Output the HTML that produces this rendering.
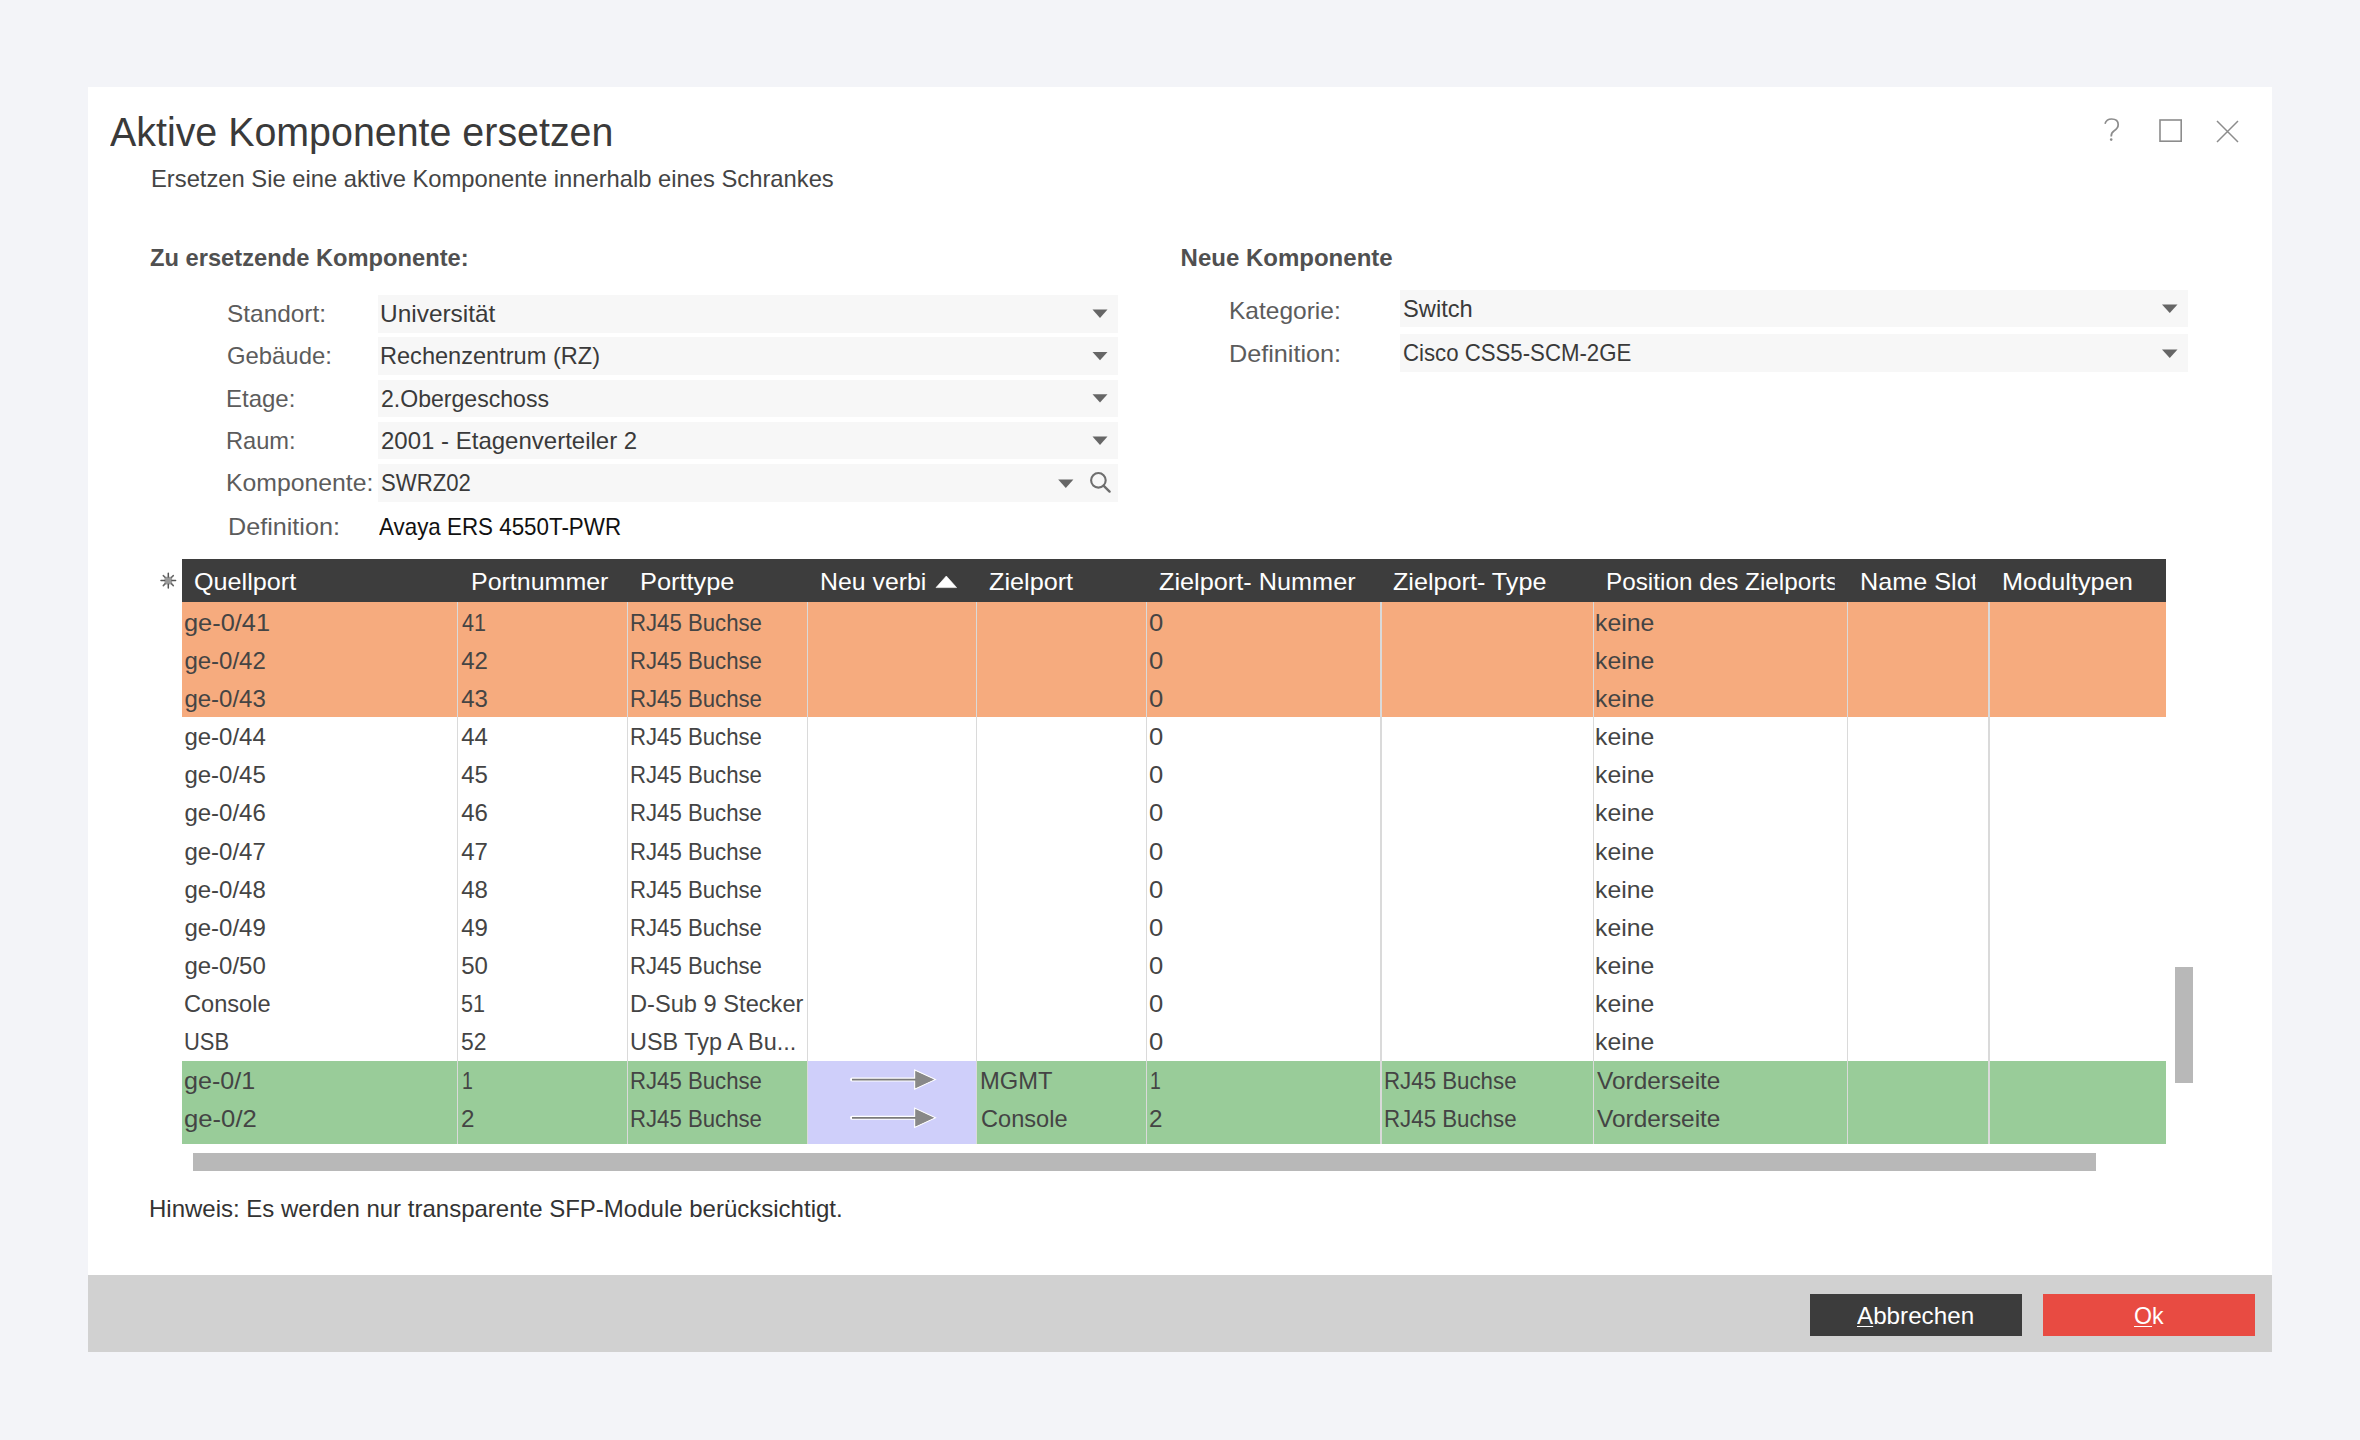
<!DOCTYPE html>
<html><head><meta charset="utf-8"><style>
html,body{margin:0;padding:0;}
body{width:2360px;height:1440px;background:#f3f4f8;position:relative;overflow:hidden;font-family:"Liberation Sans", sans-serif;}
u{text-decoration-thickness:1.4px;text-underline-offset:1.5px;}
</style></head><body>
<div style="position:absolute;left:88px;top:87px;width:2184.00px;height:1265.00px;background:#ffffff;"></div><div style="position:absolute;left:88px;top:1275px;width:2184.00px;height:77.00px;background:#d1d1d1;"></div><div style="position:absolute;left:110.00px;top:112.00px;font-size:40px;line-height:40px;color:#3a3a3a;font-weight:400;white-space:pre;transform:scaleX(0.9843);transform-origin:0 0;">Aktive Komponente ersetzen</div><div style="position:absolute;left:150.72px;top:166.60px;font-size:24px;line-height:24px;color:#444;font-weight:400;white-space:pre;transform:scaleX(0.9898);transform-origin:0 0;">Ersetzen Sie eine aktive Komponente innerhalb eines Schrankes</div><div style="position:absolute;left:150.01px;top:245.60px;font-size:24px;line-height:24px;color:#505050;font-weight:700;white-space:pre;transform:scaleX(0.9875);transform-origin:0 0;">Zu ersetzende Komponente:</div><div style="position:absolute;left:1180.61px;top:245.60px;font-size:24px;line-height:24px;color:#505050;font-weight:700;white-space:pre;">Neue Komponente</div><svg style="position:absolute;left:0;top:0" width="2360" height="1440">
<path d="M2105 123.8 Q2106.5 119 2111.6 119 Q2118.2 119 2118.2 124.6 Q2118.2 128.4 2114.2 130.8 Q2111.2 132.6 2111.2 136.4" fill="none" stroke="#8c8c8c" stroke-width="1.7"/>
<circle cx="2111.2" cy="139.6" r="1.3" fill="#8c8c8c"/>
<rect x="2160" y="120" width="21.2" height="21.2" fill="none" stroke="#8c8c8c" stroke-width="1.6"/>
<path d="M2217 121 L2238 142 M2238 121 L2217 142" stroke="#8c8c8c" stroke-width="1.5"/>
</svg><div style="position:absolute;left:378px;top:295.0px;width:739.70px;height:37.60px;background:#f7f7f7;"></div><div style="position:absolute;left:226.98px;top:302.00px;font-size:24px;line-height:24px;color:#5c5c5c;font-weight:400;white-space:pre;transform:scaleX(1.0170);transform-origin:0 0;">Standort:</div><div style="position:absolute;left:379.96px;top:302.00px;font-size:24px;line-height:24px;color:#3a3a3a;font-weight:400;white-space:pre;transform:scaleX(1.0180);transform-origin:0 0;">Universität</div><div style="position:absolute;left:378px;top:337.3px;width:739.70px;height:37.60px;background:#f7f7f7;"></div><div style="position:absolute;left:227.01px;top:344.30px;font-size:24px;line-height:24px;color:#5c5c5c;font-weight:400;white-space:pre;transform:scaleX(0.9941);transform-origin:0 0;">Gebäude:</div><div style="position:absolute;left:380.04px;top:344.30px;font-size:24px;line-height:24px;color:#3a3a3a;font-weight:400;white-space:pre;transform:scaleX(0.9819);transform-origin:0 0;">Rechenzentrum (RZ)</div><div style="position:absolute;left:378px;top:379.6px;width:739.70px;height:37.60px;background:#f7f7f7;"></div><div style="position:absolute;left:226.00px;top:386.60px;font-size:24px;line-height:24px;color:#5c5c5c;font-weight:400;white-space:pre;">Etage:</div><div style="position:absolute;left:381.04px;top:386.60px;font-size:24px;line-height:24px;color:#3a3a3a;font-weight:400;white-space:pre;transform:scaleX(0.9613);transform-origin:0 0;">2.Obergeschoss</div><div style="position:absolute;left:378px;top:421.9px;width:739.70px;height:37.60px;background:#f7f7f7;"></div><div style="position:absolute;left:226.03px;top:428.90px;font-size:24px;line-height:24px;color:#5c5c5c;font-weight:400;white-space:pre;transform:scaleX(0.9851);transform-origin:0 0;">Raum:</div><div style="position:absolute;left:381.00px;top:428.90px;font-size:24px;line-height:24px;color:#3a3a3a;font-weight:400;white-space:pre;">2001 - Etagenverteiler 2</div><div style="position:absolute;left:378px;top:464.2px;width:739.70px;height:37.60px;background:#f7f7f7;"></div><div style="position:absolute;left:225.94px;top:471.20px;font-size:24px;line-height:24px;color:#5c5c5c;font-weight:400;white-space:pre;transform:scaleX(1.0324);transform-origin:0 0;">Komponente:</div><div style="position:absolute;left:381.08px;top:471.20px;font-size:24px;line-height:24px;color:#3a3a3a;font-weight:400;white-space:pre;transform:scaleX(0.9221);transform-origin:0 0;">SWRZ02</div><div style="position:absolute;left:227.70px;top:514.60px;font-size:24px;line-height:24px;color:#5c5c5c;font-weight:400;white-space:pre;transform:scaleX(1.0485);transform-origin:0 0;">Definition:</div><div style="position:absolute;left:379.00px;top:514.60px;font-size:24px;line-height:24px;color:#111;font-weight:400;white-space:pre;transform:scaleX(0.9322);transform-origin:0 0;">Avaya ERS 4550T-PWR</div><div style="position:absolute;left:1400px;top:290px;width:788.00px;height:36.80px;background:#f7f7f7;"></div><div style="position:absolute;left:1400px;top:334px;width:788.00px;height:37.80px;background:#f7f7f7;"></div><div style="position:absolute;left:1228.56px;top:298.90px;font-size:24px;line-height:24px;color:#5c5c5c;font-weight:400;white-space:pre;transform:scaleX(1.0210);transform-origin:0 0;">Kategorie:</div><div style="position:absolute;left:1228.50px;top:341.60px;font-size:24px;line-height:24px;color:#5c5c5c;font-weight:400;white-space:pre;transform:scaleX(1.0505);transform-origin:0 0;">Definition:</div><div style="position:absolute;left:1402.91px;top:296.60px;font-size:24px;line-height:24px;color:#3a3a3a;font-weight:400;white-space:pre;transform:scaleX(0.9868);transform-origin:0 0;">Switch</div><div style="position:absolute;left:1402.97px;top:341.20px;font-size:24px;line-height:24px;color:#3a3a3a;font-weight:400;white-space:pre;transform:scaleX(0.9253);transform-origin:0 0;">Cisco CSS5-SCM-2GE</div><svg style="position:absolute;left:0;top:0" width="2360" height="1440"><path d="M1092.5 309.6 L1107.5 309.6 L1100.00 318.0 Z" fill="#666"/><path d="M1092.5 351.9 L1107.5 351.9 L1100.00 360.3 Z" fill="#666"/><path d="M1092.5 394.2 L1107.5 394.2 L1100.00 402.6 Z" fill="#666"/><path d="M1092.5 436.5 L1107.5 436.5 L1100.00 444.9 Z" fill="#666"/><path d="M1058.2 479.6 L1073.4 479.6 L1065.80 488.0 Z" fill="#666"/><path d="M2162 304.5 L2177.5 304.5 L2169.75 312.9 Z" fill="#666"/><path d="M2162 349.5 L2177.5 349.5 L2169.75 357.9 Z" fill="#666"/><circle cx="1098.4" cy="480.3" r="7.3" fill="none" stroke="#6e6e6e" stroke-width="2.1"/><path d="M1103.5 485.6 L1109.6 491.6" stroke="#6e6e6e" stroke-width="2.4" stroke-linecap="round"/></svg><div style="position:absolute;left:181.8px;top:559px;width:1984.60px;height:43.00px;background:#3d3d3d;"></div><div style="position:absolute;left:193.95px;top:569.60px;font-size:24px;line-height:24px;color:#fff;font-weight:400;white-space:pre;transform:scaleX(1.0490);transform-origin:0 0;">Quellport</div><div style="position:absolute;left:470.62px;top:569.60px;font-size:24px;line-height:24px;color:#fff;font-weight:400;white-space:pre;transform:scaleX(1.0408);transform-origin:0 0;">Portnummer</div><div style="position:absolute;left:640.09px;top:569.60px;font-size:24px;line-height:24px;color:#fff;font-weight:400;white-space:pre;transform:scaleX(1.0570);transform-origin:0 0;">Porttype</div><div style="position:absolute;left:819.53px;top:569.60px;font-size:24px;line-height:24px;color:#fff;font-weight:400;white-space:pre;transform:scaleX(1.0354);transform-origin:0 0;">Neu verbi</div><div style="position:absolute;left:988.95px;top:569.60px;font-size:24px;line-height:24px;color:#fff;font-weight:400;white-space:pre;transform:scaleX(1.0506);transform-origin:0 0;">Zielport</div><div style="position:absolute;left:1159.45px;top:569.60px;font-size:24px;line-height:24px;color:#fff;font-weight:400;white-space:pre;transform:scaleX(1.0532);transform-origin:0 0;">Zielport- Nummer</div><div style="position:absolute;left:1393.35px;top:569.60px;font-size:24px;line-height:24px;color:#fff;font-weight:400;white-space:pre;transform:scaleX(1.0486);transform-origin:0 0;">Zielport- Type</div><div style="position:absolute;left:1605.58px;top:569.60px;font-size:24px;line-height:24px;color:#fff;font-weight:400;white-space:pre;transform:scaleX(1.0120);transform-origin:0 0;width:226.2px;overflow:hidden;">Position des Zielports</div><div style="position:absolute;left:1860.30px;top:569.60px;font-size:24px;line-height:24px;color:#fff;font-weight:400;white-space:pre;transform:scaleX(1.0500);transform-origin:0 0;width:110.2px;overflow:hidden;">Name Slot</div><div style="position:absolute;left:2001.69px;top:569.60px;font-size:24px;line-height:24px;color:#fff;font-weight:400;white-space:pre;transform:scaleX(1.0545);transform-origin:0 0;">Modultypen</div><svg style="position:absolute;left:0;top:0" width="2360" height="1440"><path d="M936 587.6 L956.6 587.6 L946.3 576 Z" fill="#fff" stroke="#fff" stroke-width="0.6" stroke-linejoin="round"/></svg><svg style="position:absolute;left:0;top:0" width="2360" height="1440">
<rect x="164.5" y="576.8" width="7.6" height="7.6" fill="#999"/>
<g stroke="#555" stroke-width="1.5" stroke-linecap="round">
<path d="M168.3 573.2 L168.3 577 M168.3 584.2 L168.3 588 M161 580.6 L164.6 580.6 M172 580.6 L175.6 580.6"/>
<path d="M163.3 575.6 L165 577.3 M173.3 575.6 L171.6 577.3 M163.3 585.6 L165 583.9 M173.3 585.6 L171.6 583.9" stroke="#666"/>
</g></svg><div style="position:absolute;left:181.8px;top:602px;width:1984.60px;height:114.51px;background:#f6ab7e;"></div><div style="position:absolute;left:181.8px;top:1060.7px;width:1984.60px;height:83.30px;background:#99cc99;"></div><div style="position:absolute;left:807.3px;top:1060.7px;width:169.50px;height:83.30px;background:#cfcffa;"></div><div style="position:absolute;left:457.15000000000003px;top:602px;width:1.30px;height:542.00px;background:#dadada;"></div><div style="position:absolute;left:626.75px;top:602px;width:1.30px;height:542.00px;background:#dadada;"></div><div style="position:absolute;left:806.65px;top:602px;width:1.30px;height:542.00px;background:#dadada;"></div><div style="position:absolute;left:976.15px;top:602px;width:1.30px;height:542.00px;background:#dadada;"></div><div style="position:absolute;left:1145.75px;top:602px;width:1.30px;height:542.00px;background:#dadada;"></div><div style="position:absolute;left:1380.35px;top:602px;width:1.30px;height:542.00px;background:#dadada;"></div><div style="position:absolute;left:1592.55px;top:602px;width:1.30px;height:542.00px;background:#dadada;"></div><div style="position:absolute;left:1846.85px;top:602px;width:1.30px;height:542.00px;background:#dadada;"></div><div style="position:absolute;left:1988.25px;top:602px;width:1.30px;height:542.00px;background:#dadada;"></div><div style="position:absolute;left:184.34px;top:610.60px;font-size:24px;line-height:24px;color:#444;font-weight:400;white-space:pre;transform:scaleX(1.0570);transform-origin:0 0;">ge-0/41</div><div style="position:absolute;left:462.20px;top:610.60px;font-size:24px;line-height:24px;color:#444;font-weight:400;white-space:pre;transform:scaleX(0.8962);transform-origin:0 0;">41</div><div style="position:absolute;left:630.45px;top:610.60px;font-size:24px;line-height:24px;color:#444;font-weight:400;white-space:pre;transform:scaleX(0.9243);transform-origin:0 0;">RJ45 Buchse</div><div style="position:absolute;left:1149.13px;top:610.60px;font-size:24px;line-height:24px;color:#444;font-weight:400;white-space:pre;transform:scaleX(1.0667);transform-origin:0 0;">0</div><div style="position:absolute;left:1594.54px;top:610.60px;font-size:24px;line-height:24px;color:#444;font-weight:400;white-space:pre;transform:scaleX(1.0315);transform-origin:0 0;">keine</div><div style="position:absolute;left:184.40px;top:648.77px;font-size:24px;line-height:24px;color:#444;font-weight:400;white-space:pre;">ge-0/42</div><div style="position:absolute;left:461.20px;top:648.77px;font-size:24px;line-height:24px;color:#444;font-weight:400;white-space:pre;">42</div><div style="position:absolute;left:630.45px;top:648.77px;font-size:24px;line-height:24px;color:#444;font-weight:400;white-space:pre;transform:scaleX(0.9243);transform-origin:0 0;">RJ45 Buchse</div><div style="position:absolute;left:1149.13px;top:648.77px;font-size:24px;line-height:24px;color:#444;font-weight:400;white-space:pre;transform:scaleX(1.0667);transform-origin:0 0;">0</div><div style="position:absolute;left:1594.54px;top:648.77px;font-size:24px;line-height:24px;color:#444;font-weight:400;white-space:pre;transform:scaleX(1.0315);transform-origin:0 0;">keine</div><div style="position:absolute;left:184.40px;top:686.94px;font-size:24px;line-height:24px;color:#444;font-weight:400;white-space:pre;">ge-0/43</div><div style="position:absolute;left:461.20px;top:686.94px;font-size:24px;line-height:24px;color:#444;font-weight:400;white-space:pre;">43</div><div style="position:absolute;left:630.45px;top:686.94px;font-size:24px;line-height:24px;color:#444;font-weight:400;white-space:pre;transform:scaleX(0.9243);transform-origin:0 0;">RJ45 Buchse</div><div style="position:absolute;left:1149.13px;top:686.94px;font-size:24px;line-height:24px;color:#444;font-weight:400;white-space:pre;transform:scaleX(1.0667);transform-origin:0 0;">0</div><div style="position:absolute;left:1594.54px;top:686.94px;font-size:24px;line-height:24px;color:#444;font-weight:400;white-space:pre;transform:scaleX(1.0315);transform-origin:0 0;">keine</div><div style="position:absolute;left:184.40px;top:725.11px;font-size:24px;line-height:24px;color:#444;font-weight:400;white-space:pre;">ge-0/44</div><div style="position:absolute;left:461.20px;top:725.11px;font-size:24px;line-height:24px;color:#444;font-weight:400;white-space:pre;">44</div><div style="position:absolute;left:630.45px;top:725.11px;font-size:24px;line-height:24px;color:#444;font-weight:400;white-space:pre;transform:scaleX(0.9243);transform-origin:0 0;">RJ45 Buchse</div><div style="position:absolute;left:1149.13px;top:725.11px;font-size:24px;line-height:24px;color:#444;font-weight:400;white-space:pre;transform:scaleX(1.0667);transform-origin:0 0;">0</div><div style="position:absolute;left:1594.54px;top:725.11px;font-size:24px;line-height:24px;color:#444;font-weight:400;white-space:pre;transform:scaleX(1.0315);transform-origin:0 0;">keine</div><div style="position:absolute;left:184.40px;top:763.28px;font-size:24px;line-height:24px;color:#444;font-weight:400;white-space:pre;">ge-0/45</div><div style="position:absolute;left:461.20px;top:763.28px;font-size:24px;line-height:24px;color:#444;font-weight:400;white-space:pre;">45</div><div style="position:absolute;left:630.45px;top:763.28px;font-size:24px;line-height:24px;color:#444;font-weight:400;white-space:pre;transform:scaleX(0.9243);transform-origin:0 0;">RJ45 Buchse</div><div style="position:absolute;left:1149.13px;top:763.28px;font-size:24px;line-height:24px;color:#444;font-weight:400;white-space:pre;transform:scaleX(1.0667);transform-origin:0 0;">0</div><div style="position:absolute;left:1594.54px;top:763.28px;font-size:24px;line-height:24px;color:#444;font-weight:400;white-space:pre;transform:scaleX(1.0315);transform-origin:0 0;">keine</div><div style="position:absolute;left:184.40px;top:801.45px;font-size:24px;line-height:24px;color:#444;font-weight:400;white-space:pre;">ge-0/46</div><div style="position:absolute;left:461.20px;top:801.45px;font-size:24px;line-height:24px;color:#444;font-weight:400;white-space:pre;">46</div><div style="position:absolute;left:630.45px;top:801.45px;font-size:24px;line-height:24px;color:#444;font-weight:400;white-space:pre;transform:scaleX(0.9243);transform-origin:0 0;">RJ45 Buchse</div><div style="position:absolute;left:1149.13px;top:801.45px;font-size:24px;line-height:24px;color:#444;font-weight:400;white-space:pre;transform:scaleX(1.0667);transform-origin:0 0;">0</div><div style="position:absolute;left:1594.54px;top:801.45px;font-size:24px;line-height:24px;color:#444;font-weight:400;white-space:pre;transform:scaleX(1.0315);transform-origin:0 0;">keine</div><div style="position:absolute;left:184.40px;top:839.62px;font-size:24px;line-height:24px;color:#444;font-weight:400;white-space:pre;">ge-0/47</div><div style="position:absolute;left:461.20px;top:839.62px;font-size:24px;line-height:24px;color:#444;font-weight:400;white-space:pre;">47</div><div style="position:absolute;left:630.45px;top:839.62px;font-size:24px;line-height:24px;color:#444;font-weight:400;white-space:pre;transform:scaleX(0.9243);transform-origin:0 0;">RJ45 Buchse</div><div style="position:absolute;left:1149.13px;top:839.62px;font-size:24px;line-height:24px;color:#444;font-weight:400;white-space:pre;transform:scaleX(1.0667);transform-origin:0 0;">0</div><div style="position:absolute;left:1594.54px;top:839.62px;font-size:24px;line-height:24px;color:#444;font-weight:400;white-space:pre;transform:scaleX(1.0315);transform-origin:0 0;">keine</div><div style="position:absolute;left:184.40px;top:877.79px;font-size:24px;line-height:24px;color:#444;font-weight:400;white-space:pre;">ge-0/48</div><div style="position:absolute;left:461.20px;top:877.79px;font-size:24px;line-height:24px;color:#444;font-weight:400;white-space:pre;">48</div><div style="position:absolute;left:630.45px;top:877.79px;font-size:24px;line-height:24px;color:#444;font-weight:400;white-space:pre;transform:scaleX(0.9243);transform-origin:0 0;">RJ45 Buchse</div><div style="position:absolute;left:1149.13px;top:877.79px;font-size:24px;line-height:24px;color:#444;font-weight:400;white-space:pre;transform:scaleX(1.0667);transform-origin:0 0;">0</div><div style="position:absolute;left:1594.54px;top:877.79px;font-size:24px;line-height:24px;color:#444;font-weight:400;white-space:pre;transform:scaleX(1.0315);transform-origin:0 0;">keine</div><div style="position:absolute;left:184.40px;top:915.96px;font-size:24px;line-height:24px;color:#444;font-weight:400;white-space:pre;">ge-0/49</div><div style="position:absolute;left:461.20px;top:915.96px;font-size:24px;line-height:24px;color:#444;font-weight:400;white-space:pre;">49</div><div style="position:absolute;left:630.45px;top:915.96px;font-size:24px;line-height:24px;color:#444;font-weight:400;white-space:pre;transform:scaleX(0.9243);transform-origin:0 0;">RJ45 Buchse</div><div style="position:absolute;left:1149.13px;top:915.96px;font-size:24px;line-height:24px;color:#444;font-weight:400;white-space:pre;transform:scaleX(1.0667);transform-origin:0 0;">0</div><div style="position:absolute;left:1594.54px;top:915.96px;font-size:24px;line-height:24px;color:#444;font-weight:400;white-space:pre;transform:scaleX(1.0315);transform-origin:0 0;">keine</div><div style="position:absolute;left:184.40px;top:954.13px;font-size:24px;line-height:24px;color:#444;font-weight:400;white-space:pre;">ge-0/50</div><div style="position:absolute;left:461.20px;top:954.13px;font-size:24px;line-height:24px;color:#444;font-weight:400;white-space:pre;">50</div><div style="position:absolute;left:630.45px;top:954.13px;font-size:24px;line-height:24px;color:#444;font-weight:400;white-space:pre;transform:scaleX(0.9243);transform-origin:0 0;">RJ45 Buchse</div><div style="position:absolute;left:1149.13px;top:954.13px;font-size:24px;line-height:24px;color:#444;font-weight:400;white-space:pre;transform:scaleX(1.0667);transform-origin:0 0;">0</div><div style="position:absolute;left:1594.54px;top:954.13px;font-size:24px;line-height:24px;color:#444;font-weight:400;white-space:pre;transform:scaleX(1.0315);transform-origin:0 0;">keine</div><div style="position:absolute;left:184.42px;top:992.30px;font-size:24px;line-height:24px;color:#444;font-weight:400;white-space:pre;transform:scaleX(0.9837);transform-origin:0 0;">Console</div><div style="position:absolute;left:461.30px;top:992.30px;font-size:24px;line-height:24px;color:#444;font-weight:400;white-space:pre;transform:scaleX(0.9000);transform-origin:0 0;">51</div><div style="position:absolute;left:630.33px;top:992.30px;font-size:24px;line-height:24px;color:#444;font-weight:400;white-space:pre;transform:scaleX(0.9851);transform-origin:0 0;">D-Sub 9 Stecker</div><div style="position:absolute;left:1149.13px;top:992.30px;font-size:24px;line-height:24px;color:#444;font-weight:400;white-space:pre;transform:scaleX(1.0667);transform-origin:0 0;">0</div><div style="position:absolute;left:1594.54px;top:992.30px;font-size:24px;line-height:24px;color:#444;font-weight:400;white-space:pre;transform:scaleX(1.0315);transform-origin:0 0;">keine</div><div style="position:absolute;left:183.57px;top:1030.47px;font-size:24px;line-height:24px;color:#444;font-weight:400;white-space:pre;transform:scaleX(0.9130);transform-origin:0 0;">USB</div><div style="position:absolute;left:461.25px;top:1030.47px;font-size:24px;line-height:24px;color:#444;font-weight:400;white-space:pre;transform:scaleX(0.9520);transform-origin:0 0;">52</div><div style="position:absolute;left:630.35px;top:1030.47px;font-size:24px;line-height:24px;color:#444;font-weight:400;white-space:pre;transform:scaleX(0.9759);transform-origin:0 0;">USB Typ A Bu...</div><div style="position:absolute;left:1149.13px;top:1030.47px;font-size:24px;line-height:24px;color:#444;font-weight:400;white-space:pre;transform:scaleX(1.0667);transform-origin:0 0;">0</div><div style="position:absolute;left:1594.54px;top:1030.47px;font-size:24px;line-height:24px;color:#444;font-weight:400;white-space:pre;transform:scaleX(1.0315);transform-origin:0 0;">keine</div><div style="position:absolute;left:184.35px;top:1068.64px;font-size:24px;line-height:24px;color:#444;font-weight:400;white-space:pre;transform:scaleX(1.0455);transform-origin:0 0;">ge-0/1</div><div style="position:absolute;left:462.38px;top:1068.64px;font-size:24px;line-height:24px;color:#444;font-weight:400;white-space:pre;transform:scaleX(0.8100);transform-origin:0 0;">1</div><div style="position:absolute;left:630.45px;top:1068.64px;font-size:24px;line-height:24px;color:#444;font-weight:400;white-space:pre;transform:scaleX(0.9243);transform-origin:0 0;">RJ45 Buchse</div><div style="position:absolute;left:979.62px;top:1068.64px;font-size:24px;line-height:24px;color:#444;font-weight:400;white-space:pre;transform:scaleX(0.9887);transform-origin:0 0;">MGMT</div><div style="position:absolute;left:1150.38px;top:1068.64px;font-size:24px;line-height:24px;color:#444;font-weight:400;white-space:pre;transform:scaleX(0.8100);transform-origin:0 0;">1</div><div style="position:absolute;left:1383.64px;top:1068.64px;font-size:24px;line-height:24px;color:#444;font-weight:400;white-space:pre;transform:scaleX(0.9286);transform-origin:0 0;">RJ45 Buchse</div><div style="position:absolute;left:1596.60px;top:1068.64px;font-size:24px;line-height:24px;color:#444;font-weight:400;white-space:pre;transform:scaleX(1.0167);transform-origin:0 0;">Vorderseite</div><div style="position:absolute;left:184.33px;top:1106.81px;font-size:24px;line-height:24px;color:#444;font-weight:400;white-space:pre;transform:scaleX(1.0697);transform-origin:0 0;">ge-0/2</div><div style="position:absolute;left:461.19px;top:1106.81px;font-size:24px;line-height:24px;color:#444;font-weight:400;white-space:pre;transform:scaleX(1.0091);transform-origin:0 0;">2</div><div style="position:absolute;left:630.45px;top:1106.81px;font-size:24px;line-height:24px;color:#444;font-weight:400;white-space:pre;transform:scaleX(0.9243);transform-origin:0 0;">RJ45 Buchse</div><div style="position:absolute;left:980.62px;top:1106.81px;font-size:24px;line-height:24px;color:#444;font-weight:400;white-space:pre;transform:scaleX(0.9826);transform-origin:0 0;">Console</div><div style="position:absolute;left:1149.19px;top:1106.81px;font-size:24px;line-height:24px;color:#444;font-weight:400;white-space:pre;transform:scaleX(1.0091);transform-origin:0 0;">2</div><div style="position:absolute;left:1383.64px;top:1106.81px;font-size:24px;line-height:24px;color:#444;font-weight:400;white-space:pre;transform:scaleX(0.9286);transform-origin:0 0;">RJ45 Buchse</div><div style="position:absolute;left:1596.60px;top:1106.81px;font-size:24px;line-height:24px;color:#444;font-weight:400;white-space:pre;transform:scaleX(1.0167);transform-origin:0 0;">Vorderseite</div><svg style="position:absolute;left:0;top:0" width="2360" height="1440"><path d="M852 1079.6 L916 1079.6" stroke="#fff" stroke-width="4" stroke-linecap="round"/><path d="M914.8 1070.2 L935 1079.6 L914.8 1089.0 Z" fill="#888" stroke="#fff" stroke-width="1.4"/><path d="M852 1079.6 L916 1079.6" stroke="#7a7a7a" stroke-width="1.8"/><path d="M915.4 1070.9 L934.2 1079.6 L915.4 1088.3 Z" fill="#888"/><path d="M852 1117.8 L916 1117.8" stroke="#fff" stroke-width="4" stroke-linecap="round"/><path d="M914.8 1108.4 L935 1117.8 L914.8 1127.2 Z" fill="#888" stroke="#fff" stroke-width="1.4"/><path d="M852 1117.8 L916 1117.8" stroke="#7a7a7a" stroke-width="1.8"/><path d="M915.4 1109.1 L934.2 1117.8 L915.4 1126.5 Z" fill="#888"/></svg><div style="position:absolute;left:193px;top:1153px;width:1903.00px;height:18.00px;background:#b8b8b8;"></div><div style="position:absolute;left:2175px;top:967px;width:18.00px;height:116.00px;background:#b8b8b8;"></div><div style="position:absolute;left:149.00px;top:1196.60px;font-size:24px;line-height:24px;color:#333;font-weight:400;white-space:pre;">Hinweis: Es werden nur transparente SFP-Module berücksichtigt.</div><div style="position:absolute;left:1810px;top:1294px;width:212.00px;height:42.00px;background:#3c3c3c;"></div><div style="position:absolute;left:2043px;top:1294px;width:212.00px;height:42.00px;background:#e84b42;"></div><div style="position:absolute;left:1857.00px;top:1303.60px;font-size:24px;line-height:24px;color:#fff;font-weight:400;white-space:pre;transform:scaleX(1.0087);transform-origin:0 0;"><u>A</u>bbrechen</div><div style="position:absolute;left:2133.63px;top:1303.60px;font-size:24px;line-height:24px;color:#fff;font-weight:400;white-space:pre;transform:scaleX(0.9667);transform-origin:0 0;"><u>O</u>k</div>
</body></html>
